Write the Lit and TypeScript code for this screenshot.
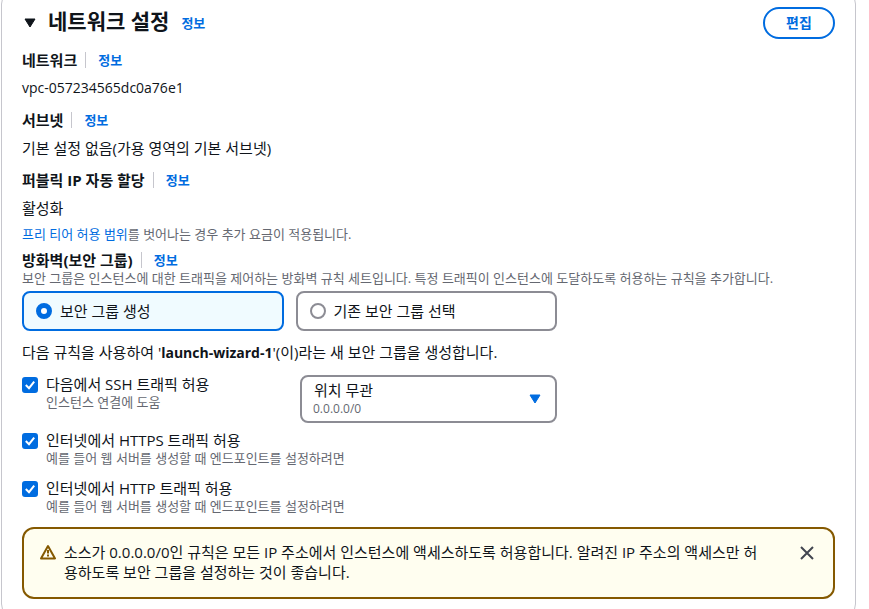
import { LitElement, html, css, svg } from "lit";
import { customElement, property } from "lit/decorators.js";

const base = css`
  * {
    box-sizing: border-box;
  }
  a {
    color: #006ce0;
    text-decoration: none;
  }
  a:hover {
    text-decoration: underline;
  }
`;

@customElement("field-label")
class FieldLabel extends LitElement {
  static styles = [
    base,
    css`
      :host {
        display: flex;
        align-items: center;
        height: 20px;
        font-size: 15px;
        line-height: 20px;
        font-weight: 700;
        white-space: nowrap;
      }
      .info {
        margin-left: 8px;
        padding-left: 12px;
        border-left: 1px solid #c6c6cd;
        font-size: 13px;
        line-height: 16px;
      }
    `,
  ];
  render() {
    return html`<slot></slot><a class="info" href="#">정보</a>`;
  }
}

@customElement("traffic-option")
class TrafficOption extends LitElement {
  static styles = [
    base,
    css`
      :host {
        display: block;
      }
      .row {
        display: grid;
        grid-template-columns: 16px auto;
        column-gap: 8px;
        justify-content: start;
      }
      .box {
        display: grid;
        margin-top: 2px;
        width: 16px;
        height: 16px;
      }
      .input,
      .tick {
        grid-area: 1 / 1;
        width: 16px;
        height: 16px;
        margin: 0;
      }
      .input {
        appearance: none;
        border: 2px solid #8c8c94;
        border-radius: 3px;
        background: #ffffff;
      }
      .input:checked {
        border-color: #006ce0;
        background: #006ce0;
      }
      .tick {
        pointer-events: none;
      }
      .name {
        display: block;
        line-height: 19px;
        font-size: 15px;
      }
      .hint {
        display: block;
        line-height: 16px;
        font-size: 13px;
        color: #656871;
      }
    `,
  ];
  @property() name = "";
  @property() hint = "";
  render() {
    return html`<div class="row">
      <span class="box">
        <input class="input" id="option" type="checkbox" checked aria-describedby="hint" />
        <svg class="tick" viewBox="0 0 16 16" aria-hidden="true">
          <path d="M3.8 8 7 11.2 12.2 4.6" fill="none" stroke="#fff" stroke-width="2" />
        </svg>
      </span>
      <div>
        <label class="name" for="option">${this.name}</label>
        <span class="hint" id="hint">${this.hint}</span>
      </div>
    </div>`;
  }
}

const triangle = (color: string) =>
  svg`<path d="M1 1h10L6 9z" fill=${color} stroke=${color} stroke-linejoin="round" />`;

@customElement("app-root")
class AppRoot extends LitElement {
  static styles = [
    base,
    css`
      :host {
        display: block;
        height: 100vh;
        overflow: hidden;
        background: #ffffff;
        color: #0f141a;
        font-family: "Open Sans", "Noto Sans CJK KR", sans-serif;
        font-size: 15px;
        line-height: 20px;
      }
      .card {
        margin: -12px 13px 0 1px;
        padding: 18px 20px 20px;
        border: 1px solid #c6c6cd;
        border-radius: 16px;
      }
      .header {
        display: flex;
        align-items: center;
        height: 32px;
        margin-bottom: 11px;
      }
      .toggle {
        display: flex;
        align-items: center;
        gap: 12px;
        padding: 0 0 0 2px;
        border: 0;
        background: none;
        color: inherit;
        font: inherit;
      }
      .arrow {
        width: 12px;
        height: 10px;
      }
      .title {
        margin: 0;
        padding-bottom: 4px;
        font-size: 21px;
        line-height: 24px;
        font-weight: 700;
      }
      .info {
        margin-left: 12px;
        font-size: 13px;
        font-weight: 700;
      }
      .edit {
        width: 72px;
        height: 32px;
        margin-left: auto;
        padding: 0;
        border: 2px solid #006ce0;
        border-radius: 16px;
        background: #ffffff;
        color: #006ce0;
        font: inherit;
        font-size: 14px;
        font-weight: 700;
      }
      .field {
        margin-bottom: 12px;
      }
      .field.compact {
        margin-bottom: 8px;
      }
      .value {
        margin: 8px 0 0;
      }
      .latin {
        font-size: 14px;
      }
      .note {
        margin: 0 0 8px;
        font-size: 13px;
        line-height: 16px;
        color: #656871;
      }
      .note.tight {
        margin-bottom: 5px;
      }
      .tiles {
        display: grid;
        grid-template-columns: 1fr 1fr;
        gap: 12px;
        max-width: 535px;
        margin: 0;
        padding: 0;
        border: 0;
      }
      .tile {
        display: flex;
        align-items: center;
        gap: 8px;
        height: 40px;
        padding: 0 12px;
        border: 2px solid #8c8c94;
        border-radius: 8px;
      }
      .tile:has(:checked) {
        border-color: #006ce0;
        background: #f0fbff;
      }
      .radio {
        appearance: none;
        width: 16px;
        height: 16px;
        margin: 0;
        border: 2px solid #8c8c94;
        border-radius: 50%;
        background: #ffffff;
      }
      .radio:checked {
        border: 5px solid #006ce0;
      }
      .sentence {
        margin: 11px 0 12px;
      }
      .ssh {
        display: grid;
        grid-template-columns: 1fr 257px;
        max-width: 535px;
        margin-bottom: 8px;
      }
      .select {
        position: relative;
        height: 48px;
      }
      .native {
        appearance: none;
        width: 100%;
        height: 48px;
        padding: 3px 40px 21px 12px;
        border: 2px solid #8c8c94;
        border-radius: 8px;
        background: #ffffff;
        color: inherit;
        font: inherit;
      }
      .range {
        position: absolute;
        left: 13px;
        bottom: 6px;
        font-size: 12px;
        line-height: 16px;
        color: #656871;
        pointer-events: none;
      }
      .caret {
        position: absolute;
        right: 16px;
        top: 19px;
        width: 12px;
        height: 10px;
        pointer-events: none;
      }
      .option {
        margin-bottom: 13px;
      }
      .alert {
        display: flex;
        align-items: flex-start;
        padding: 13px 16px 15px;
        border: 2px solid #855900;
        border-radius: 12px;
        background: #fffef0;
      }
      .warning {
        flex: none;
        width: 16px;
        height: 16px;
        margin: 2px 8px 0 0;
      }
      .message {
        flex: 1;
        margin: 0;
        word-break: break-all;
      }
      .close {
        flex: none;
        width: 20px;
        height: 20px;
        margin: 1px 0 0 32px;
        padding: 2px;
        border: 0;
        background: none;
      }
      .cross {
        display: block;
        width: 16px;
        height: 16px;
      }
    `,
  ];

  render() {
    return html`<section class="card">
      <header class="header">
        <button class="toggle" aria-expanded="true">
          <svg class="arrow" viewBox="0 0 12 10" aria-hidden="true">${triangle("#0f141a")}</svg>
          <h2 class="title">네트워크 설정</h2>
        </button>
        <a class="info" href="#">정보</a>
        <button class="edit">편집</button>
      </header>

      <div class="field">
        <field-label>네트워크</field-label>
        <p class="value latin">vpc-057234565dc0a76e1</p>
      </div>
      <div class="field">
        <field-label>서브넷</field-label>
        <p class="value">기본 설정 없음(가용 영역의 기본 서브넷)</p>
      </div>
      <div class="field compact">
        <field-label>퍼블릭 IP 자동 할당</field-label>
        <p class="value">활성화</p>
      </div>
      <p class="note"><a href="#">프리 티어 허용 범위</a>를 벗어나는 경우 추가 요금이 적용됩니다.</p>

      <field-label>방화벽(보안 그룹)</field-label>
      <p class="note tight">
        보안 그룹은 인스턴스에 대한 트래픽을 제어하는 방화벽 규칙 세트입니다. 특정 트래픽이 인스턴스에 도달하도록 허용하는 규칙을 추가합니다.
      </p>
      <fieldset class="tiles" aria-label="방화벽(보안 그룹)">
        <label class="tile"><input class="radio" type="radio" name="group" checked />보안 그룹 생성</label>
        <label class="tile"><input class="radio" type="radio" name="group" />기존 보안 그룹 선택</label>
      </fieldset>
      <p class="sentence">다음 규칙을 사용하여 '<b class="latin">launch-wizard-1</b>'(이)라는 새 보안 그룹을 생성합니다.</p>

      <div class="ssh">
        <traffic-option name="다음에서 SSH 트래픽 허용" hint="인스턴스 연결에 도움"></traffic-option>
        <div class="select">
          <select class="native" aria-label="다음에서 SSH 트래픽 허용" aria-describedby="range">
            <option>위치 무관</option>
          </select>
          <span class="range" id="range">0.0.0.0/0</span>
          <svg class="caret" viewBox="0 0 12 10" aria-hidden="true">${triangle("#006ce0")}</svg>
        </div>
      </div>
      <traffic-option class="option" name="인터넷에서 HTTPS 트래픽 허용" hint="예를 들어 웹 서버를 생성할 때 엔드포인트를 설정하려면"></traffic-option>
      <traffic-option class="option" name="인터넷에서 HTTP 트래픽 허용" hint="예를 들어 웹 서버를 생성할 때 엔드포인트를 설정하려면"></traffic-option>

      <div class="alert" role="alert">
        <svg class="warning" viewBox="0 0 16 16" aria-hidden="true">
          <path d="M8 2 15 14.5H1z" fill="none" stroke="#855900" stroke-width="2" stroke-linejoin="round" />
          <path d="M8 6v3.5M8 10.5v2" stroke="#855900" stroke-width="2" />
        </svg>
        <p class="message">
          소스가 0.0.0.0/0인 규칙은 모든 IP 주소에서 인스턴스에 액세스하도록 허용합니다. 알려진 IP 주소의 액세스만 허용하도록 보안 그룹을 설정하는 것이 좋습니다.
        </p>
        <button class="close" aria-label="닫기">
          <svg class="cross" viewBox="0 0 16 16" aria-hidden="true">
            <path d="M2 2 14 14M14 2 2 14" stroke="#424650" stroke-width="2" />
          </svg>
        </button>
      </div>
    </section>`;
  }
}
